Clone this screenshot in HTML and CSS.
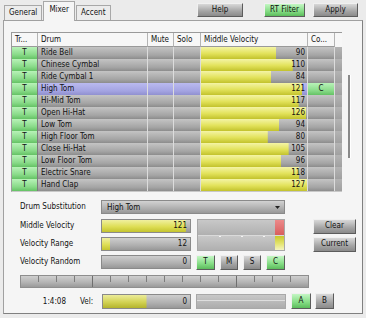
FILE: index.html
```html
<!DOCTYPE html>
<html lang="en">
<head>
  <meta charset="UTF-8">
  <title>Drum Mixer</title>
  <link rel="stylesheet" href="styles.css">
</head>
<body>

  <div class="topbar">
    <div class="tabs">
      <div class="tab">General</div>
      <div class="tab active">Mixer</div>
      <div class="tab">Accent</div>
    </div>
    <div class="btn top-help">Help</div>
    <div class="btn green top-rt">RT Filter</div>
    <div class="btn top-apply">Apply</div>
  </div>

  <div class="panel">
    <div class="grid-wrap">
      <div class="grid" id="grid">
        <div class="hd">Tr...</div>
        <div class="hd">Drum</div>
        <div class="hd">Mute</div>
        <div class="hd">Solo</div>
        <div class="hd">Middle Velocity</div>
        <div class="hd">Co...</div>
        <div class="hd filler-hd"></div>
        <!-- rows added by JS -->
      </div>
      <div class="scroll"></div>
    </div>

    <div class="form">
      <div class="lbl l1">Drum Substitution</div>
      <div class="select">
        <span>High Tom</span>
        <svg width="5" height="3" viewBox="0 0 5 3"><path d="M0 0h5L2.5 3z" fill="#222"/></svg>
      </div>

      <div class="lbl l2">Middle Velocity</div>
      <div class="bar b2" style="--v: 95.3%">121</div>

      <div class="lbl l3">Velocity Range</div>
      <div class="bar b3" style="--v: 9.4%">12</div>

      <div class="lbl l4">Velocity Random</div>
      <div class="bar b4" style="--v: 0%">0</div>

      <div class="meter">
        <div class="meter-row">
          <div class="lvl"></div>
          <div class="peak red"></div>
        </div>
        <div class="meter-row low">
          <div class="lvl"></div>
          <div class="peak yellow"></div>
        </div>
      </div>

      <div class="btn clr">Clear</div>
      <div class="btn cur">Current</div>

      <div class="tmsc">
        <div class="btn green w19">T</div>
        <div class="btn w18">M</div>
        <div class="btn w18">S</div>
        <div class="btn green w19">C</div>
      </div>
    </div>

    <div class="ruler"></div>

    <div class="bottom">
      <span class="time">1:4:08</span>
      <span class="vel">Vel:</span>
      <div class="bar vbar" style="--v: 50%">0</div>
      <div class="vmeter"></div>
      <div class="btn green ab a">A</div>
      <div class="btn ab b">B</div>
    </div>
  </div>

  <script>
    const grid = document.getElementById('grid');
    const drums = [
      ["Ride Bell", 90], ["Chinese Cymbal", 110], ["Ride Cymbal 1", 84],
      ["High Tom", 121], ["Hi-Mid Tom", 117], ["Open Hi-Hat", 126],
      ["Low Tom", 94], ["High Floor Tom", 80], ["Close Hi-Hat", 105],
      ["Low Floor Tom", 96], ["Electric Snare", 118], ["Hand Clap", 127]
    ];
    const selected = "High Tom";

    const cell = (cls, text) => {
      const d = document.createElement("div");
      d.className = "c " + cls;
      d.textContent = text || "";
      grid.appendChild(d);
      return d;
    }

    drums.forEach(([name, vel]) => {
      const sel = name === selected ? " sel" : "";
      cell("t", "T");
      cell("name" + sel, name);
      cell("plain" + sel);
      cell("plain" + sel);
      const v = cell("velo" + sel, vel);
      v.style.setProperty("--v", (vel / 127 * 100).toFixed(1) + "%");
      if (sel) cell("t co", "C");
      else cell("plain");
      cell("filler");
    });
  </script>
</body>
</html>
```

FILE: styles.css
```css
body {
  margin: 0;
  width: 366px;
  height: 318px;
  overflow: hidden;
  background: #ebebeb;
  font-family: "DejaVu Sans Condensed", "Liberation Sans", Arial, sans-serif;
  font-size: 8px;
  color: #111;
}
.topbar {
  display: flex;
  height: 20px;
  align-items: flex-end;
  padding-left: 4px;
}
.tabs {
  display: flex;
  align-items: flex-end;
  gap: 1px;
}
.tab {
  height: 15px;
  box-sizing: border-box;
  padding: 0 4px;
  line-height: 14px;
  border: 1px solid #a8a8a8;
  border-bottom: none;
  background: #ececec;
}
.tab.active {
  position: relative;
  z-index: 1;
  height: 20px;
  margin-bottom: -1px;
  padding: 0 5px;
  line-height: 16px;
  background: #f5f5f5;
}
.btn {
  box-sizing: border-box;
  height: 14px;
  line-height: 12px;
  text-align: center;
  border: 1px solid;
  border-color: #f0f0f0 #5c5c5c #5c5c5c #f0f0f0;
  background: linear-gradient(#d8d8d8, #a4a4a4 60%, #8a8a8a);
}
.btn.green {
  background: linear-gradient(#c4f6c4, #84dc84 60%, #5cbc5c);
}
.top-help {
  align-self: flex-start;
  margin: 3px 0 0 auto;
  width: 46px;
}
.top-rt {
  align-self: flex-start;
  margin: 3px 0 0 21px;
  width: 41px;
}
.top-apply {
  align-self: flex-start;
  margin: 3px 8px 0 8px;
  width: 45px;
}
.panel {
  margin-left: 3px;
  width: 351px;
  height: 281px;
  padding: 11px 0 0 7px;
  border: 1px solid #a0a0a0;
  border-right-color: #808080;
  border-bottom-color: #808080;
  background: #f5f5f5;
}
.grid-wrap {
  display: flex;
}
.grid {
  display: grid;
  grid-template-columns: 26px 110px 26px 27px 107px 27px 7px;
  grid-auto-rows: 12px;
  grid-template-rows: 14px;
  border-top: 1px solid #9a9a9a;
  border-left: 1px solid #9a9a9a;
  border-bottom: 1px solid #c8c8c8;
}
.hd {
  padding-left: 3px;
  line-height: 13px;
  background: #f7f7f7;
  border-right: 1px solid #b4b4b4;
  border-bottom: 1px solid #9a9a9a;
  white-space: nowrap;
  overflow: hidden;
}
.filler-hd {
  border-right: none;
  border-bottom: none;
}
.c {
  box-sizing: border-box;
  line-height: 12px;
  white-space: nowrap;
  overflow: hidden;
  border-right: 1px solid #dcdcdc;
  background: linear-gradient(#c4c4c4, #a4a4a4 70%, #8c8c8c);
}
.c.t {
  text-align: center;
  border-right-color: #7a7a7a;
  background: linear-gradient(#b8f2b8, #88da88 65%, #64c264);
}
.c.co {
  border-right-color: #dcdcdc;
}
.c.name {
  padding-left: 3px;
}
.c.sel {
  background: linear-gradient(#babaf0, #a4a4e2 65%, #9090d0);
}
.c.velo {
  text-align: right;
  padding-right: 2px;
  background:
    linear-gradient(#f4f4a6, #e2e25a 55%, #c2c22c) no-repeat 0 0 / var(--v) 100%,
    linear-gradient(#c4c4c4, #a4a4a4 70%, #8c8c8c);
}
.c.velo.sel {
  background:
    linear-gradient(#f4f4a6, #e2e25a 55%, #c2c22c) no-repeat 0 0 / var(--v) 100%,
    linear-gradient(#babaf0, #a4a4e2 65%, #9090d0);
}
.c.filler {
  border-right: none;
  background: linear-gradient(#b4b4b4, #a0a0a0);
}
.scroll {
  width: 2px;
  height: 83px;
  margin: 43px 0 0 6px;
  background: #8a8a8a;
  border-right: 1px solid #ffffff;
}
.form {
  display: grid;
  grid-template-columns: 81px 90px 6px 88px 28px 43px;
  grid-template-rows: 15px 14px 14px 14px;
  grid-template-areas:
    "l1 dd dd dd . ."
    "l2 b2 . mt . clr"
    "l3 b3 . mt . cur"
    "l4 b4 . tb . .";
  row-gap: 4px;
  margin: 8px 0 0 9px;
}
.lbl {
  line-height: 14px;
  white-space: nowrap;
}
.l1 { grid-area: l1; }
.l2 { grid-area: l2; }
.l3 { grid-area: l3; }
.l4 { grid-area: l4; }
.b2 { grid-area: b2; }
.b3 { grid-area: b3; }
.b4 { grid-area: b4; }
.select {
  grid-area: dd;
  height: 14px;
  box-sizing: border-box;
  display: flex;
  align-items: center;
  justify-content: space-between;
  padding: 0 4px 0 5px;
  border: 1px solid #8a8a8a;
  background: linear-gradient(#d2d2d2, #b0b0b0 60%, #989898);
}
.bar {
  height: 14px;
  box-sizing: border-box;
  line-height: 12px;
  text-align: right;
  padding-right: 3px;
  border: 1px solid #8a8a8a;
  background:
    linear-gradient(#f0f0a0, #dede56 55%, #c4c42e) no-repeat 0 0 / var(--v) 100%,
    linear-gradient(#cecece, #b0b0b0 60%, #989898);
}
.meter {
  grid-area: mt;
  display: flex;
  flex-direction: column;
  border: 1px solid #a8a8a8;
}
.meter-row {
  flex: 1;
  display: flex;
}
.meter-row.low {
  border-top: 1px solid #dadada;
}
.lvl {
  flex: 1;
  background: linear-gradient(#c8c8c8, #b0b0b0);
}
.low .lvl {
  background:
    linear-gradient(#f4f4f4, #f4f4f4) no-repeat 21px 0 / 2px 1px,
    linear-gradient(#f4f4f4, #f4f4f4) no-repeat 43px 0 / 2px 1px,
    linear-gradient(#f4f4f4, #f4f4f4) no-repeat 65px 0 / 2px 1px,
    linear-gradient(#c8c8c8, #b0b0b0);
}
.peak {
  width: 9px;
}
.peak.red {
  background: linear-gradient(#ec8a8a, #d85e5e);
}
.peak.yellow {
  background: linear-gradient(#c8c82c, #e4e470 55%, #f4f4c0);
}
.clr {
  grid-area: clr;
  height: 15px;
}
.cur {
  grid-area: cur;
  height: 15px;
}
.tmsc {
  grid-area: tb;
  display: flex;
  gap: 5px;
  margin-left: -1px;
}
.tmsc .btn {
  height: 15px;
}
.w19 { width: 19px; }
.w18 { width: 18px; }
.ruler {
  width: 289px;
  height: 13px;
  box-sizing: border-box;
  margin: 6px 0 0 9px;
  border: 1px solid #8e8e8e;
  background:
    repeating-linear-gradient(to right, transparent 0 71px, #6e6e6e 71px 72px, transparent 72px 144px),
    repeating-linear-gradient(to right, transparent 0 17px, #7c7c7c 17px 18px) no-repeat 0 0 / 100% 6px,
    linear-gradient(#cfcfcf, #b2b2b2 60%, #9a9a9a);
}
.bottom {
  display: flex;
  align-items: center;
  height: 16px;
  margin: 5px 0 0 9px;
}
.time {
  width: 46px;
  text-align: right;
}
.vel {
  width: 22px;
  margin-left: 14px;
}
.vbar {
  width: 89px;
  height: 15px;
  line-height: 13px;
  background:
    linear-gradient(#ecec9a, #d2d254 55%, #b4b42c) no-repeat 0 0 / var(--v) 100%,
    linear-gradient(#cecece, #b0b0b0 60%, #989898);
}
.vmeter {
  width: 90px;
  height: 15px;
  box-sizing: border-box;
  margin-left: 5px;
  border: 1px solid #a8a8a8;
  background:
    linear-gradient(transparent 5px, #dedede 5px 6px, transparent 6px),
    linear-gradient(#c8c8c8, #acacac);
}
.ab {
  height: 16px;
  line-height: 14px;
}
.a {
  width: 20px;
  margin-left: 5px;
}
.b {
  width: 19px;
  margin-left: 4px;
}
```
